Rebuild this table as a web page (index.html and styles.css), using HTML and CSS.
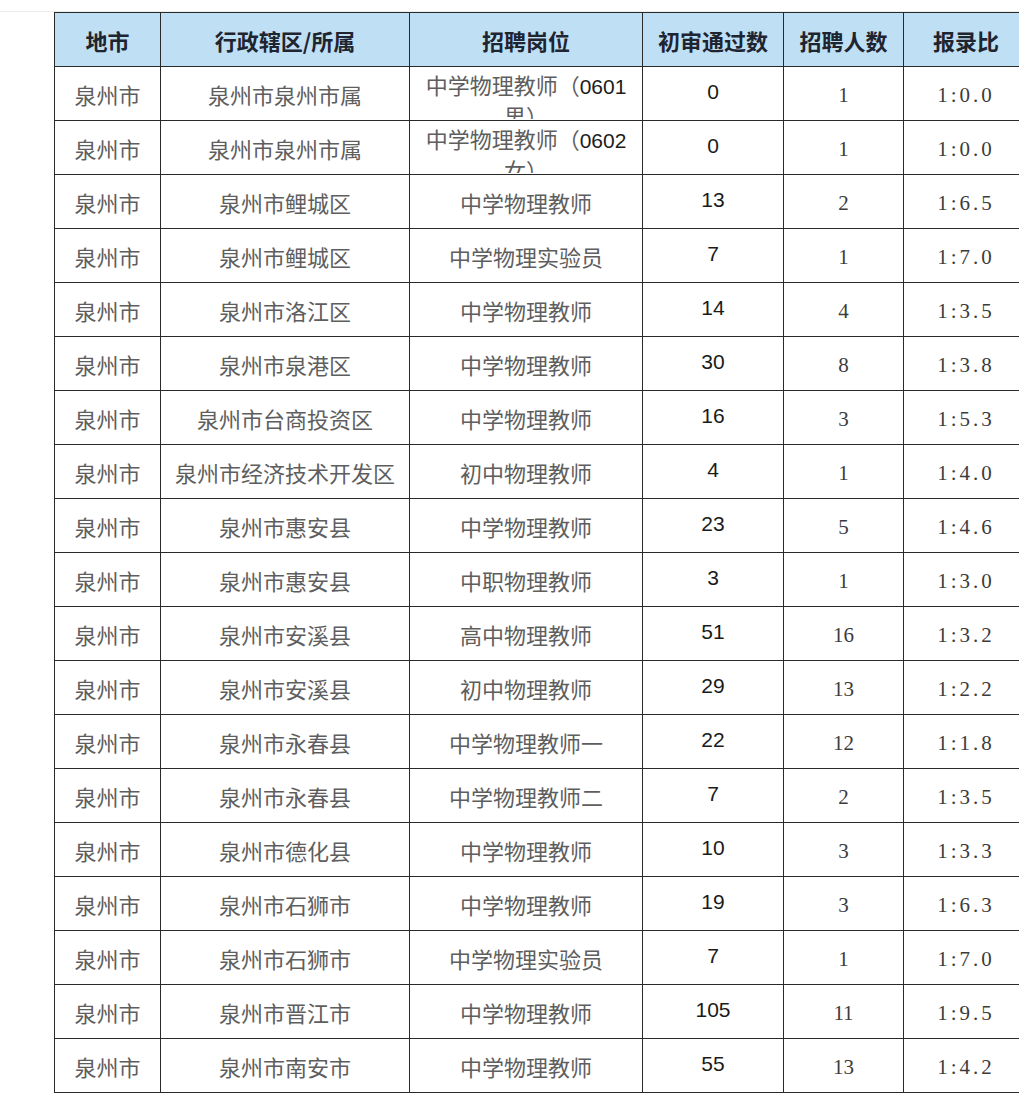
FILE: index.html
```html
<!DOCTYPE html>
<html lang="zh-CN">
<head>
<meta charset="utf-8">
<title>泉州市物理教师招聘</title>
<link rel="stylesheet" href="styles.css">
</head>
<body>
<div class="page">
<table class="grid">
<colgroup>
<col class="c1"><col class="c2"><col class="c3"><col class="c4"><col class="c5"><col class="c6">
</colgroup>
<thead>
<tr><th>地市</th><th>行政辖区/所属</th><th>招聘岗位</th><th>初审通过数</th><th>招聘人数</th><th>报录比</th></tr>
</thead>
<tbody>
<tr><td>泉州市</td><td>泉州市泉州市属</td><td class="wrap"><div class="clip">中学物理教师（<span class="lat">0601</span>男）</div></td><td class="num">0</td><td class="ser">1</td><td class="ratio">1:0.0</td></tr>
<tr><td>泉州市</td><td>泉州市泉州市属</td><td class="wrap"><div class="clip">中学物理教师（<span class="lat">0602</span>女）</div></td><td class="num">0</td><td class="ser">1</td><td class="ratio">1:0.0</td></tr>
<tr><td>泉州市</td><td>泉州市鲤城区</td><td>中学物理教师</td><td class="num">13</td><td class="ser">2</td><td class="ratio">1:6.5</td></tr>
<tr><td>泉州市</td><td>泉州市鲤城区</td><td>中学物理实验员</td><td class="num">7</td><td class="ser">1</td><td class="ratio">1:7.0</td></tr>
<tr><td>泉州市</td><td>泉州市洛江区</td><td>中学物理教师</td><td class="num">14</td><td class="ser">4</td><td class="ratio">1:3.5</td></tr>
<tr><td>泉州市</td><td>泉州市泉港区</td><td>中学物理教师</td><td class="num">30</td><td class="ser">8</td><td class="ratio">1:3.8</td></tr>
<tr><td>泉州市</td><td>泉州市台商投资区</td><td>中学物理教师</td><td class="num">16</td><td class="ser">3</td><td class="ratio">1:5.3</td></tr>
<tr><td>泉州市</td><td>泉州市经济技术开发区</td><td>初中物理教师</td><td class="num">4</td><td class="ser">1</td><td class="ratio">1:4.0</td></tr>
<tr><td>泉州市</td><td>泉州市惠安县</td><td>中学物理教师</td><td class="num">23</td><td class="ser">5</td><td class="ratio">1:4.6</td></tr>
<tr><td>泉州市</td><td>泉州市惠安县</td><td>中职物理教师</td><td class="num">3</td><td class="ser">1</td><td class="ratio">1:3.0</td></tr>
<tr><td>泉州市</td><td>泉州市安溪县</td><td>高中物理教师</td><td class="num">51</td><td class="ser">16</td><td class="ratio">1:3.2</td></tr>
<tr><td>泉州市</td><td>泉州市安溪县</td><td>初中物理教师</td><td class="num">29</td><td class="ser">13</td><td class="ratio">1:2.2</td></tr>
<tr><td>泉州市</td><td>泉州市永春县</td><td>中学物理教师一</td><td class="num">22</td><td class="ser">12</td><td class="ratio">1:1.8</td></tr>
<tr><td>泉州市</td><td>泉州市永春县</td><td>中学物理教师二</td><td class="num">7</td><td class="ser">2</td><td class="ratio">1:3.5</td></tr>
<tr><td>泉州市</td><td>泉州市德化县</td><td>中学物理教师</td><td class="num">10</td><td class="ser">3</td><td class="ratio">1:3.3</td></tr>
<tr><td>泉州市</td><td>泉州市石狮市</td><td>中学物理教师</td><td class="num">19</td><td class="ser">3</td><td class="ratio">1:6.3</td></tr>
<tr><td>泉州市</td><td>泉州市石狮市</td><td>中学物理实验员</td><td class="num">7</td><td class="ser">1</td><td class="ratio">1:7.0</td></tr>
<tr><td>泉州市</td><td>泉州市晋江市</td><td>中学物理教师</td><td class="num">105</td><td class="ser">11</td><td class="ratio">1:9.5</td></tr>
<tr><td>泉州市</td><td>泉州市南安市</td><td>中学物理教师</td><td class="num">55</td><td class="ser">13</td><td class="ratio">1:4.2</td></tr>
</tbody>
</table>
</div>
</body>
</html>
```

FILE: styles.css
```css
html, body {
  margin: 0;
  padding: 0;
  background: #ffffff;
  overflow: hidden;
}

.page {
  margin-top: 11px;
  border-top: 1px solid #ececec;
  padding-left: 54px;
  width: 1100px;
}

.grid {
  border-collapse: collapse;
  table-layout: fixed;
  width: 974px;
  font-family: "Noto Sans CJK SC", "Noto Sans", sans-serif;
  font-size: 22px;
  color: #5e5e5e;
}

.c1 { width: 106px; }
.c2 { width: 249px; }
.c3 { width: 233px; }
.c4 { width: 141px; }
.c5 { width: 120px; }
.c6 { width: 125px; }

.grid tr {
  height: 54px;
}

.grid th,
.grid td {
  border: 1.5px solid #2a2a2a;
  text-align: center;
  vertical-align: middle;
  padding: 0;
  line-height: 28px;
  white-space: nowrap;
}

.grid th {
  background: #bfdff4;
  color: #1e2430;
  font-weight: 700;
  font-size: 22px;
}

.grid td.wrap {
  vertical-align: top;
  white-space: normal;
}

.clip {
  height: 52px;
  overflow: hidden;
  padding: 3px 6px 0 6px;
  box-sizing: border-box;
  line-height: 28px;
  word-break: break-all;
}

.lat {
  font-family: "Liberation Sans", Arial, sans-serif;
  color: #1c1c1c;
  font-size: 21px;
}

.grid td.num {
  font-family: "Liberation Sans", Arial, sans-serif;
  color: #1a1a1a;
  font-size: 21px;
  padding-bottom: 4px;
}

.grid td.ser {
  font-family: "Liberation Serif", "Times New Roman", serif;
  color: #3c3c3c;
  font-size: 21px;
  padding-top: 3px;
}

.grid td.ratio {
  font-family: "Liberation Serif", "Times New Roman", serif;
  color: #3c3c3c;
  font-size: 21px;
  letter-spacing: 3px;
  padding-top: 3px;
}
```
